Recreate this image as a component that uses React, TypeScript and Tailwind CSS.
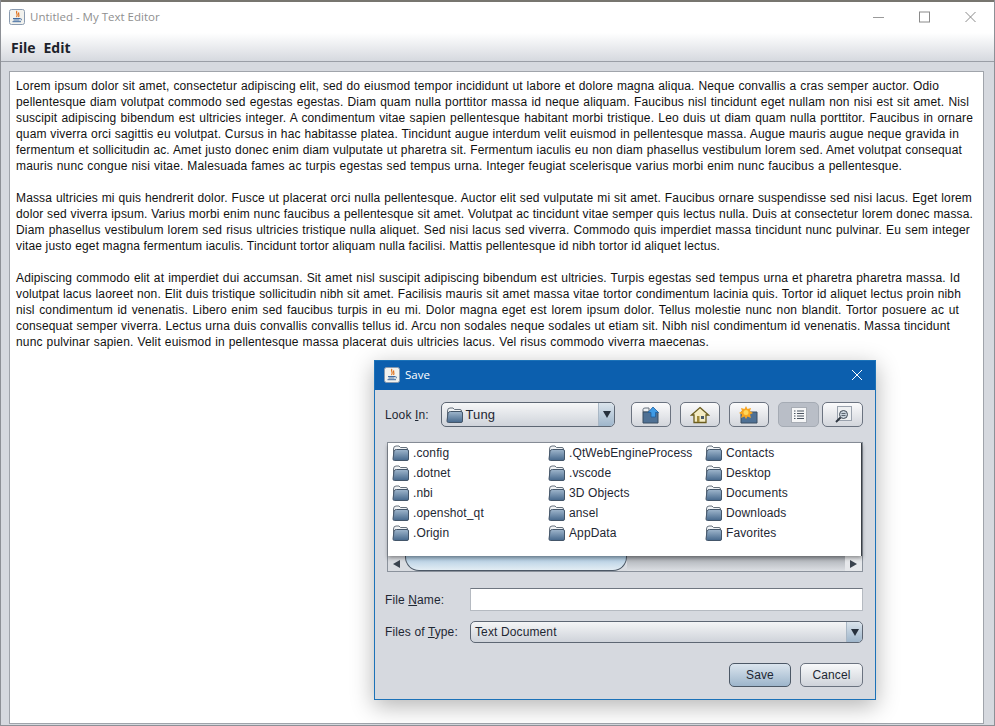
const LINES: [string, number][] = [
  ["Lorem ipsum dolor sit amet, consectetur adipiscing elit, sed do eiusmod tempor incididunt ut labore et dolore magna aliqua. Neque convallis a cras semper auctor. Odio", 923],
  ["pellentesque diam volutpat commodo sed egestas egestas. Diam quam nulla porttitor massa id neque aliquam. Faucibus nisl tincidunt eget nullam non nisi est sit amet. Nisl", 953],
  ["suscipit adipiscing bibendum est ultricies integer. A condimentum vitae sapien pellentesque habitant morbi tristique. Leo duis ut diam quam nulla porttitor. Faucibus in ornare", 957],
  ["quam viverra orci sagittis eu volutpat. Cursus in hac habitasse platea. Tincidunt augue interdum velit euismod in pellentesque massa. Augue mauris augue neque gravida in", 943],
  ["fermentum et sollicitudin ac. Amet justo donec enim diam vulputate ut pharetra sit. Fermentum iaculis eu non diam phasellus vestibulum lorem sed. Amet volutpat consequat", 946],
  ["mauris nunc congue nisi vitae. Malesuada fames ac turpis egestas sed tempus urna. Integer feugiat scelerisque varius morbi enim nunc faucibus a pellentesque.", 886],
  ["", 0],
  ["Massa ultricies mi quis hendrerit dolor. Fusce ut placerat orci nulla pellentesque. Auctor elit sed vulputate mi sit amet. Faucibus ornare suspendisse sed nisi lacus. Eget lorem", 956],
  ["dolor sed viverra ipsum. Varius morbi enim nunc faucibus a pellentesque sit amet. Volutpat ac tincidunt vitae semper quis lectus nulla. Duis at consectetur lorem donec massa.", 957],
  ["Diam phasellus vestibulum lorem sed risus ultricies tristique nulla aliquet. Sed nisi lacus sed viverra. Commodo quis imperdiet massa tincidunt nunc pulvinar. Eu sem integer", 954],
  ["vitae justo eget magna fermentum iaculis. Tincidunt tortor aliquam nulla facilisi. Mattis pellentesque id nibh tortor id aliquet lectus.", 704],
  ["", 0],
  ["Adipiscing commodo elit at imperdiet dui accumsan. Sit amet nisl suscipit adipiscing bibendum est ultricies. Turpis egestas sed tempus urna et pharetra pharetra massa. Id", 944],
  ["volutpat lacus laoreet non. Elit duis tristique sollicitudin nibh sit amet. Facilisis mauris sit amet massa vitae tortor condimentum lacinia quis. Tortor id aliquet lectus proin nibh", 945],
  ["nisl condimentum id venenatis. Libero enim sed faucibus turpis in eu mi. Dolor magna eget est lorem ipsum dolor. Tellus molestie nunc non blandit. Tortor posuere ac ut", 943],
  ["consequat semper viverra. Lectus urna duis convallis convallis tellus id. Arcu non sodales neque sodales ut etiam sit. Nibh nisl condimentum id venenatis. Massa tincidunt", 934],
  ["nunc pulvinar sapien. Velit euismod in pellentesque massa placerat duis ultricies lacus. Vel risus commodo viverra maecenas.", 693],
];

const COLS = [
  [".config", ".dotnet", ".nbi", ".openshot_qt", ".Origin"],
  [".QtWebEngineProcess", ".vscode", "3D Objects", "ansel", "AppData"],
  ["Contacts", "Desktop", "Documents", "Downloads", "Favorites"],
];

function Folder() {
  return (
    <svg width="17" height="16" viewBox="0 0 17 16" className="shrink-0">
      <defs>
        <linearGradient id="fb" x1="0" y1="0" x2="0" y2="1">
          <stop offset="0" stopColor="#9fb6cc" />
          <stop offset="1" stopColor="#46688c" />
        </linearGradient>
      </defs>
      <path d="M1.5 13 V4 Q1.5 1 4 1 H7 L8.5 2.5 H14 Q15.5 2.5 15.5 4 V8" fill="#f1f3f5" stroke="#66717d" />
      <path d="M2 6 Q2.5 4.5 4.5 4.5 H15 Q16.5 4.5 16.5 6 V14 Q16.5 15.5 15 15.5 H2.5 Q1 15.5 1 14 Z" fill="url(#fb)" stroke="#44566a" />
    </svg>
  );
}

function JavaIcon() {
  return (
    <svg width="16" height="16" viewBox="0 0 16 16" className="shrink-0">
      <rect x="0.5" y="0.5" width="15" height="15" rx="2" fill="#f2f2ee" stroke="#8a9bb0" />
      <path d="M8 2 C6 4 10 5 7.5 8 M10 3.5 C8.5 5 11 6 9.5 8" fill="none" stroke="#e0701a" strokeWidth="1.2" />
      <path d="M4 9.5 H11 M4.5 11 H10.5 M3.5 12.7 H12" stroke="#3f6aa0" strokeWidth="1" />
      <path d="M11 9.5 Q13.5 9.5 12 11.5" fill="none" stroke="#3f6aa0" strokeWidth="0.8" />
    </svg>
  );
}

function ToolBtn({ selected, width, children }: { selected?: boolean; width: string; children: React.ReactNode }) {
  return (
    <div
      className={
        selected
          ? `${width} h-[25px] flex items-center justify-center rounded-[5px] border border-[#a5abb4] bg-[#b9bec7]`
          : `${width} h-[25px] flex items-center justify-center rounded-[5px] border border-[#6b7380] bg-gradient-to-b from-[#fbfbfc] to-[#d3d6dc]`
      }
    >
      {children}
    </div>
  );
}

function ComboArrow({ w }: { w: string }) {
  return (
    <div className={`${w} h-full flex items-center justify-center rounded-r-[4px] border-l border-[#a9b7c5] bg-gradient-to-b from-[#dbe4ec] to-[#9fb6cb]`}>
      <div className="w-0 h-0 border-l-[4px] border-r-[4px] border-t-[7px] border-l-transparent border-r-transparent border-t-[#26303c]" />
    </div>
  );
}

function U({ children }: { children: string }) {
  return <span className="underline underline-offset-1">{children}</span>;
}

function SaveDialog() {
  return (
    <div className="absolute left-[373px] top-[360px] w-[502px] h-[340px] flex flex-col border border-[#1c72b8] bg-[#d6d9df] shadow-[0_6px_22px_rgba(0,0,0,0.3)]">
      <div className="h-[29px] shrink-0 bg-[#0c5fae] flex items-center pl-[9px] pr-[12px] pb-[2px] text-white text-[11.5px] font-['Segoe_UI','Open_Sans',sans-serif]">
        <JavaIcon />
        <span className="ml-[5px] flex-1">Save</span>
        <svg width="12" height="12" viewBox="0 0 12 12">
          <path d="M1 1 L11 11 M11 1 L1 11" stroke="#fff" strokeWidth="1" />
        </svg>
      </div>

      <div className="flex-1 flex flex-col pl-[10px] pr-[12px] pt-[12px] text-[12px] tracking-[0.12px] text-[#1e2733]">
        <div className="flex items-center h-[25px]">
          <span className="w-[56px]">
            Look <U>I</U>n:
          </span>
          <div className="w-[176px] h-[25px] flex items-center rounded-[5px] border border-[#5d6673] bg-gradient-to-b from-[#f6f7f8] to-[#cfd3da] overflow-hidden">
            <div className="flex-1 flex items-center gap-[3px] pl-[4px] text-[13px]">
              <Folder />
              <span>Tung</span>
            </div>
            <ComboArrow w="w-[16px]" />
          </div>
          <div className="flex items-center ml-[16px]">
            <ToolBtn width="w-[40px]">
              <svg width="20" height="18" viewBox="0 0 20 18">
                <path d="M2 6 V3.5 Q2 2 4 2 H8 V6 Z" fill="#eef1f4" stroke="#66717d" />
                <path d="M2 6 H17 V17 H2 Z" fill="#4f7195" stroke="#3b4e63" />
                <path d="M12 1 L17.5 6.5 H14.5 V11 H10 V6.5 H7 Z" fill="#3f9be6" stroke="#1f5f9e" strokeWidth="0.8" />
              </svg>
            </ToolBtn>
            <div className="w-[9px]" />
            <ToolBtn width="w-[40px]">
              <svg width="20" height="18" viewBox="0 0 20 18">
                <path d="M10 1.5 L18.5 9 H16 V16.5 H4 V9 H1.5 Z" fill="#f4ecc4" stroke="#6a5c1e" strokeWidth="1.3" />
                <rect x="7" y="10" width="2.5" height="6" fill="#a08a3a" />
                <rect x="11" y="10" width="3" height="3" fill="#4a5a6a" />
              </svg>
            </ToolBtn>
            <div className="w-[9px]" />
            <ToolBtn width="w-[40px]">
              <svg width="20" height="18" viewBox="0 0 20 18">
                <path d="M2 6 H18 V17 H2 Z" fill="#4f7195" stroke="#3b4e63" />
                <path d="M7 0 L8.5 3 L12 2 L11 5 L14 7 L11 8.5 L12 12 L8.5 10.5 L7 13 L5.5 10.5 L2 12 L3 8.5 L0 7 L3 5 L2 2 L5.5 3 Z" fill="#f7a521" />
                <circle cx="7" cy="6.5" r="2.5" fill="#ffd65a" />
              </svg>
            </ToolBtn>
            <div className="w-[9px]" />
            <ToolBtn selected width="w-[41px]">
              <svg width="16" height="16" viewBox="0 0 16 16">
                <rect x="0.5" y="0.5" width="15" height="15" fill="#f5f6f7" stroke="#a8adb5" />
                <path d="M3 4 H4.5 M6 4 H13 M3 6.5 H4.5 M6 6.5 H13 M3 9 H4.5 M6 9 H13 M3 11.5 H4.5 M6 11.5 H13" stroke="#4a5460" />
              </svg>
            </ToolBtn>
            <div className="w-[3px]" />
            <ToolBtn width="w-[41px]">
              <svg width="18" height="18" viewBox="0 0 18 18">
                <rect x="3.5" y="0.5" width="14" height="14" fill="#eef0f2" stroke="#9aa2ad" />
                <circle cx="9.5" cy="8.5" r="4" fill="#c9d3dc" stroke="#3f4a56" />
                <path d="M6.5 11.5 L2 16" stroke="#2d3640" strokeWidth="2" />
                <path d="M7.5 7.5 H11.5 M7.5 9.5 H11.5" stroke="#3f4a56" strokeWidth="0.8" />
              </svg>
            </ToolBtn>
          </div>
        </div>

        <div className="mt-[15px] ml-[2px] w-[476px] h-[130px] flex flex-col border border-[#8b929c] bg-white">
          <div className="h-[113px] flex pl-[4px] border-r border-r-[#3a3f46] shadow-[0_2px_4px_rgba(0,0,0,0.4)] relative">
            {[156, 157, 156].map((colWidth, i) => (
              <div key={i} className="flex flex-col" style={{ width: colWidth }}>
                {COLS[i].map((name) => (
                  <div key={name} className="h-[20px] flex items-center gap-[4px] whitespace-nowrap">
                    <Folder />
                    <span>{name}</span>
                  </div>
                ))}
              </div>
            ))}
          </div>
          <div className="flex-1 flex bg-[#d9dce1]">
            <div className="w-[17px] flex items-center justify-center">
              <div className="w-0 h-0 border-y-[4px] border-r-[7px] border-y-transparent border-r-[#3a434e]" />
            </div>
            <div className="w-[222px] h-full rounded-b-[14px] border border-t-0 border-[#4c5866] bg-gradient-to-b from-[#a9c7df] to-[#e3edf4]" />
            <div className="flex-1 bg-gradient-to-b from-[#a6aab0] to-[#dde0e4]" />
            <div className="w-[17px] flex items-center justify-center bg-[#e6e8eb]">
              <div className="w-0 h-0 border-y-[4px] border-l-[7px] border-y-transparent border-l-[#3a434e]" />
            </div>
          </div>
        </div>

        <div className="mt-[16px] flex items-center h-[23px]">
          <span className="w-[85px]">
            File <U>N</U>ame:
          </span>
          <div className="flex-1 h-full bg-white border border-[#b5bac1] border-t-[#6f7680]" />
        </div>

        <div className="mt-[10px] flex items-center h-[22px]">
          <span className="w-[85px]">
            Files of <U>T</U>ype:
          </span>
          <div className="flex-1 h-full flex items-center rounded-[5px] border border-[#5d6673] bg-gradient-to-b from-[#f4f5f6] to-[#cfd3da] overflow-hidden">
            <span className="flex-1 pl-[4px]">Text Document</span>
            <ComboArrow w="w-[16px]" />
          </div>
        </div>

        <div className="mt-[20px] flex justify-end gap-[9px]">
          <div className="w-[62px] h-[24px] flex items-center justify-center rounded-[5px] border border-[#4c5866] bg-gradient-to-b from-[#dbe5ee] to-[#9db5cb]">
            Save
          </div>
          <div className="w-[63px] h-[24px] flex items-center justify-center rounded-[5px] border border-[#6b7380] bg-gradient-to-b from-[#f8f9fa] to-[#cfd3da]">
            Cancel
          </div>
        </div>
      </div>
    </div>
  );
}

export default function App() {
  return (
    <div className="relative w-[995px] h-[726px] overflow-hidden flex flex-col bg-[#d6d9df] border-x border-b border-[#8d9096] font-['Liberation_Sans',Arial,sans-serif]">
      <div className="h-[2px] shrink-0 bg-[#77756f]" />
      <div className="h-[31px] shrink-0 bg-white flex items-center pl-[8px] pb-[2px] text-[11.5px] text-[#8f8f8f] font-['Segoe_UI','Open_Sans',sans-serif]">
        <JavaIcon />
        <span className="ml-[5px] flex-1">Untitled - My Text Editor</span>
        <div className="flex items-center">
          <svg width="46" height="12" viewBox="0 0 46 12">
            <path d="M0 6.5 H11" stroke="#9a9a9a" />
          </svg>
          <svg width="46" height="12" viewBox="0 0 46 12">
            <rect x="0.5" y="1" width="10" height="10" fill="none" stroke="#8a8a8a" />
          </svg>
          <svg width="29" height="12" viewBox="0 0 29 12">
            <path d="M0.5 1 L10.5 11 M10.5 1 L0.5 11" stroke="#8a8a8a" />
          </svg>
        </div>
      </div>
      <div className="h-[29px] shrink-0 flex items-center gap-[8px] pl-[10px] bg-gradient-to-b from-white to-[#d6d9df] border-b border-[#9a9ea6] text-[14px] font-bold text-[#1c222b] font-['Open_Sans','Segoe_UI',sans-serif]">
        <span>File</span>
        <span>Edit</span>
      </div>
      <div className="flex-1 pt-[9px] pb-[1px] pl-[8px] pr-[10px] min-h-0">
        <div className="h-full bg-white border border-[#a0a4ab] pl-[6px] pt-[6px] text-[12px] leading-[16px] tracking-[0.15px] text-[#111]">
          {LINES.map(([text, width], i) => (
            <div key={i} className="h-[16px] whitespace-nowrap [text-align-last:justify]" style={{ width }}>
              {text}
            </div>
          ))}
        </div>
      </div>
      <SaveDialog />
    </div>
  );
}
